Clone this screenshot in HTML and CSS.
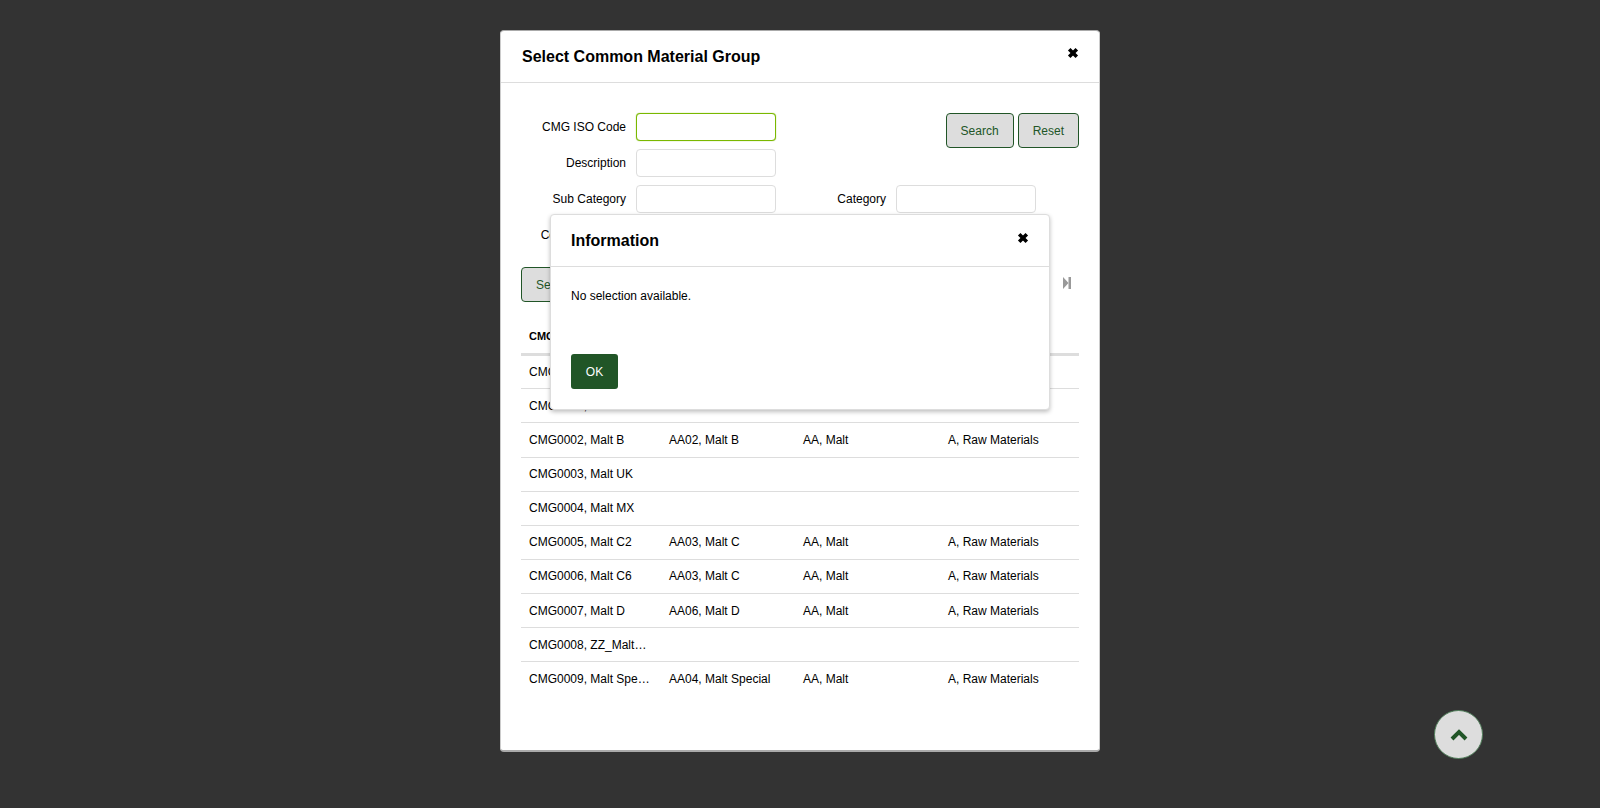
FILE: index.html
```html
<!DOCTYPE html>
<html lang="en">
<head>
  <meta charset="UTF-8">
  <meta name="viewport" content="width=device-width, initial-scale=1.0">
  <title>Select Common Material Group</title>
  <link rel="stylesheet" href="styles.css">
</head>
<body>
<div class="modal">
  <div class="modal-header">
    <h2>Select Common Material Group</h2>
    <button class="close" type="button" aria-label="Close">
      <svg viewBox="0 0 12 12" width="12" height="12"><path d="M2.2 2.2l7.6 7.6M9.8 2.2l-7.6 7.6" /></svg>
    </button>
  </div>

  <div class="modal-body">
    <form class="fields">
      <label for="isoCode">CMG ISO Code</label>
      <input type="text" id="isoCode" class="focused">
      <div class="form-buttons">
        <button class="btn" type="button">Search</button>
        <button class="btn" type="button">Reset</button>
      </div>
      <label for="description">Description</label>
      <input type="text" id="description">
      <label class="row-start" for="subCategory">Sub Category</label>
      <input type="text" id="subCategory">
      <label for="category">Category</label>
      <input type="text" id="category">
      <label class="row-start" for="group">Common Group</label>
      <input type="text" id="group">
    </form>

    <div class="toolbar">
      <button class="btn" type="button">Select</button>
      <svg class="pager-last" viewBox="0 0 8 12" width="8" height="12"><path d="M0 0l5.5 6-5.5 6z" /><rect x="5.5" y="0" width="2.5" height="12" /></svg>
    </div>

    <table class="results">
      <thead>
        <tr><th>CMG</th><th>Sub Group</th><th>Sub Category</th><th>Category</th></tr>
      </thead>
      <tbody>
        <tr><td>CMG0000, Malt</td><td></td><td></td><td></td></tr>
        <tr><td>CMG0001, Malt A</td><td></td><td></td><td></td></tr>
        <tr><td>CMG0002, Malt B</td><td>AA02, Malt B</td><td>AA, Malt</td><td>A, Raw Materials</td></tr>
        <tr><td>CMG0003, Malt UK</td><td></td><td></td><td></td></tr>
        <tr><td>CMG0004, Malt MX</td><td></td><td></td><td></td></tr>
        <tr><td>CMG0005, Malt C2</td><td>AA03, Malt C</td><td>AA, Malt</td><td>A, Raw Materials</td></tr>
        <tr><td>CMG0006, Malt C6</td><td>AA03, Malt C</td><td>AA, Malt</td><td>A, Raw Materials</td></tr>
        <tr><td>CMG0007, Malt D</td><td>AA06, Malt D</td><td>AA, Malt</td><td>A, Raw Materials</td></tr>
        <tr><td>CMG0008, ZZ_MaltWheat</td><td></td><td></td><td></td></tr>
        <tr><td>CMG0009, Malt Special</td><td>AA04, Malt Special</td><td>AA, Malt</td><td>A, Raw Materials</td></tr>
      </tbody>
    </table>
  </div>

  <div class="info-modal">
    <div class="info-header">
      <h3>Information</h3>
      <button class="close" type="button" aria-label="Close">
        <svg viewBox="0 0 12 12" width="12" height="12"><path d="M2.2 2.2l7.6 7.6M9.8 2.2l-7.6 7.6" /></svg>
      </button>
    </div>
    <div class="info-body">
      <p>No selection available.</p>
      <button class="btn-primary" type="button">OK</button>
    </div>
  </div>
</div>

<button class="scroll-top" type="button" aria-label="Back to top">
  <svg viewBox="0 0 18 12" width="18" height="12"><path d="M2 10l7-7 7 7" /></svg>
</button>
</body>
</html>
```

FILE: styles.css
```css
* {
  box-sizing: border-box;
}
body {
  font-family: "Liberation Sans", Arial, sans-serif;
  font-size: 12px;
  color: #000;
  margin: 0;
  height: 808px;
  overflow: hidden;
  background-color: #333;
}
button {
  font-family: inherit;
  font-size: 12px;
  cursor: pointer;
}

/* outer dialog */
.modal {
  position: relative;
  width: 600px;
  height: 722px;
  margin: 30px auto 0;
  background-color: #fff;
  border: 1px solid #ccc;
  border-top-color: #aaa;
  border-bottom: 2px solid #aaa;
  border-radius: 4px;
}
.modal-header {
  display: flex;
  justify-content: space-between;
  height: 52px;
  padding: 16px 20px 0 21px;
  border-bottom: 1px solid #ddd;
}
.modal-header h2 {
  margin: 1px 0 0;
  font-size: 16px;
  line-height: 18px;
}
.close {
  display: block;
  width: 12px;
  height: 12px;
  padding: 0;
  border: none;
  background: none;
}
.close svg {
  display: block;
}
.close path {
  fill: none;
  stroke: #000;
  stroke-width: 3.6;
}
.modal-body {
  padding: 30px 20px 0;
}

/* search form */
.fields {
  display: grid;
  grid-template-columns: 115px 140px 120px 140px 1fr;
  grid-auto-rows: 28px;
  row-gap: 8px;
  align-items: center;
}
.fields label {
  text-align: right;
  padding-right: 10px;
}
.fields .row-start {
  grid-column: 1;
}
.fields input {
  width: 140px;
  height: 28px;
  padding: 2px 6px;
  border: 1px solid #ddd;
  border-radius: 4px;
  outline: none;
}
.fields input.focused {
  border-color: #7ab800;
  box-shadow: 0 0 1px #7ab800;
}
.form-buttons {
  grid-column: 3 / 6;
  justify-self: end;
  align-self: start;
  display: flex;
  gap: 4px;
}
.btn {
  height: 35px;
  padding: 0 14px;
  color: #215527;
  background-color: #ddd;
  border: 1px solid #215527;
  border-radius: 4px;
}

/* toolbar above the table */
.toolbar {
  display: flex;
  justify-content: space-between;
  align-items: center;
  margin-top: 18px;
  padding-right: 8px;
}
.pager-last {
  margin-bottom: 3px;
  fill: #999;
}

/* results table */
.results {
  width: 558px;
  margin-top: 16px;
  border-collapse: collapse;
  table-layout: fixed;
}
.results th:nth-child(1) { width: 140px; }
.results th:nth-child(2) { width: 134px; }
.results th:nth-child(3) { width: 145px; }
.results th {
  height: 36px;
  padding: 2px 8px 0;
  font-size: 11px;
  text-align: left;
  border-bottom: 3px solid #ddd;
}
.results td {
  height: 34px;
  padding: 0 8px;
  white-space: nowrap;
  overflow: hidden;
  text-overflow: ellipsis;
  border-bottom: 1px solid #ddd;
}
.results tbody tr:nth-child(3) td {
  height: 35px;
}
.results tbody tr:nth-child(2) td,
.results tbody tr:nth-child(n+8) td {
  padding-top: 2px;
}
.results tr:last-child td {
  border-bottom: none;
}

/* information dialog on top */
.info-modal {
  position: absolute;
  left: 49px;
  top: 183px;
  width: 500px;
  height: 196px;
  background-color: #fff;
  border: 1px solid #ddd;
  border-radius: 4px;
  box-shadow: 0 2px 4px rgba(0, 0, 0, 0.25);
}
.info-header {
  display: flex;
  justify-content: space-between;
  height: 52px;
  padding: 17px 20px 0;
  border-bottom: 1px solid #ddd;
}
.info-header h3 {
  margin: 0;
  font-size: 16px;
  line-height: 18px;
}
.info-body {
  padding: 22px 20px 0;
}
.info-body p {
  margin: 0;
  line-height: 14px;
}
.btn-primary {
  display: block;
  width: 47px;
  height: 35px;
  margin-top: 51px;
  padding: 0;
  color: #fff;
  background-color: #215527;
  border: none;
  border-radius: 3px;
}

.scroll-top {
  position: fixed;
  right: 117px;
  bottom: 49px;
  width: 49px;
  height: 49px;
  display: flex;
  align-items: center;
  justify-content: center;
  padding: 0;
  background-color: #ddd;
  border: 1px solid #4f7d59;
  border-radius: 50%;
}
.scroll-top path {
  fill: none;
  stroke: #215527;
  stroke-width: 4;
}
```
